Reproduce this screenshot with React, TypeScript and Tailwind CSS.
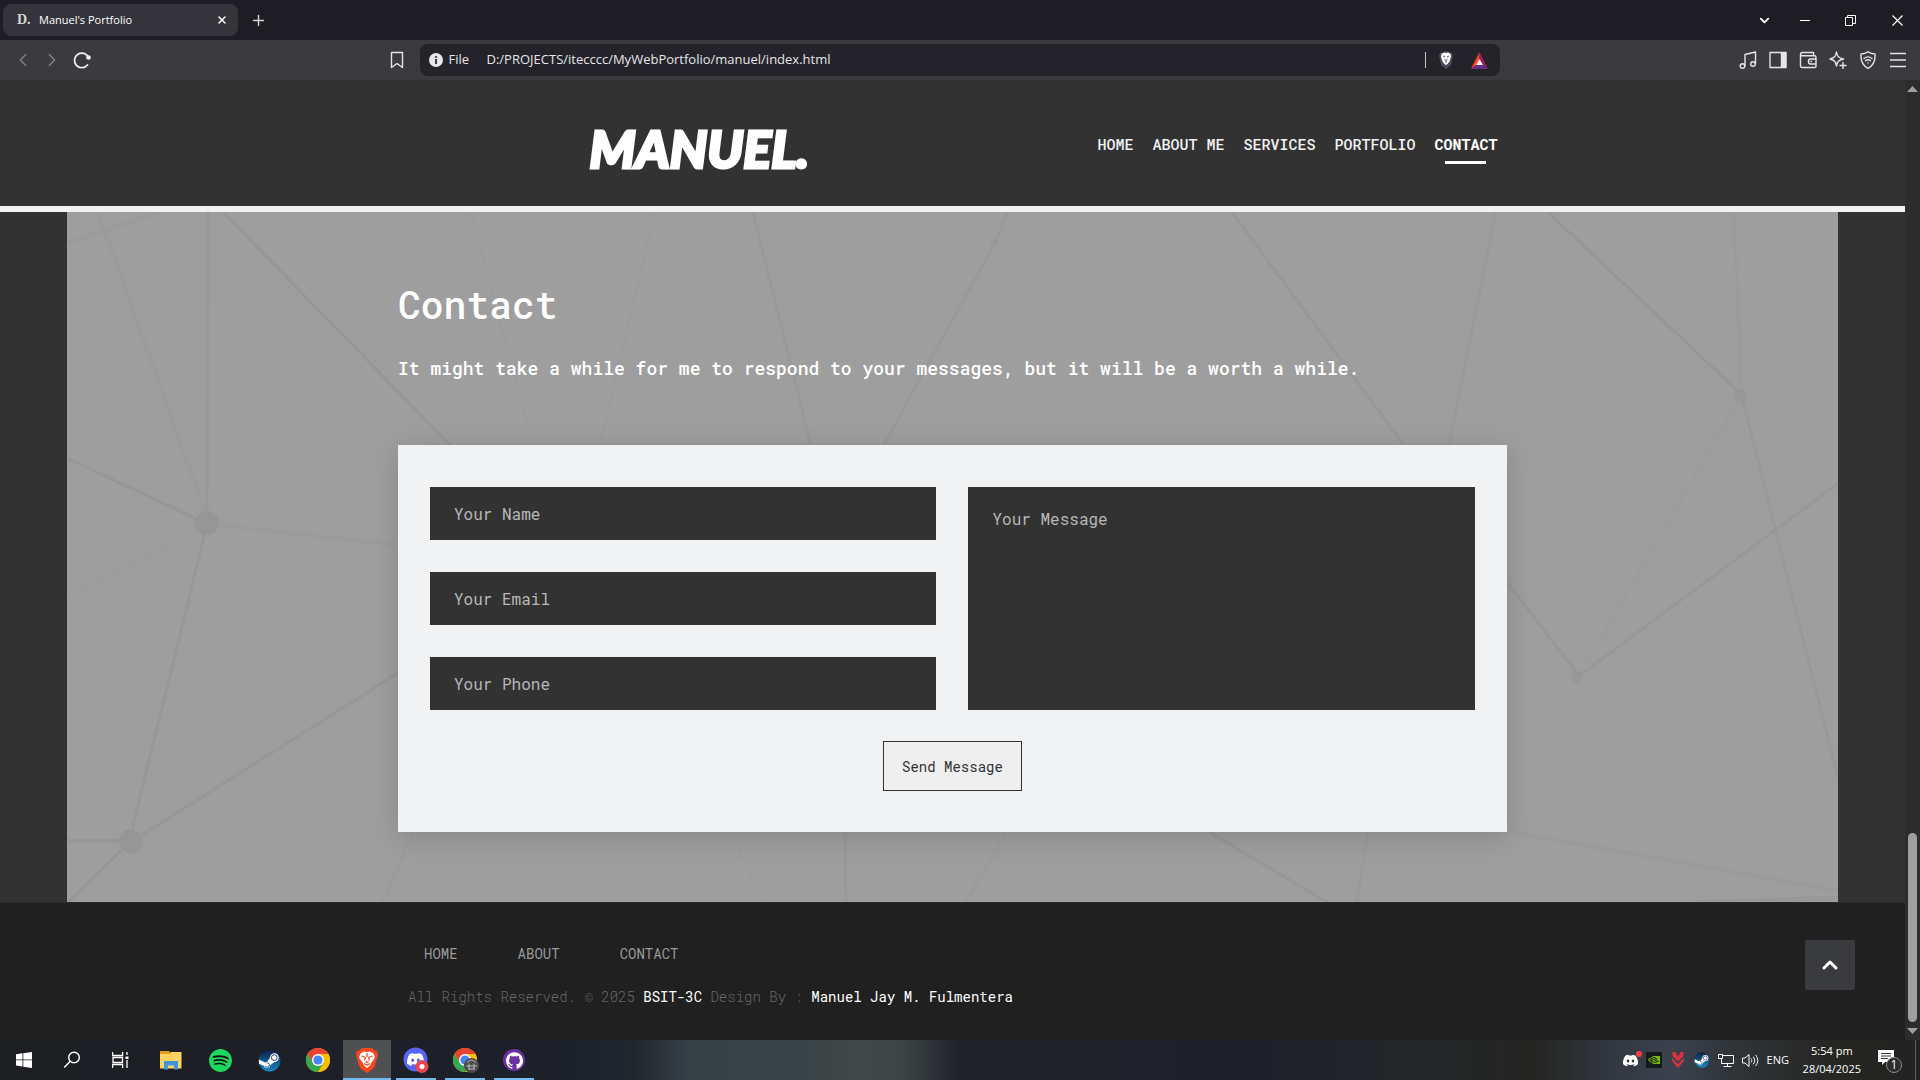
import React from "react";
import { X, Plus, ChevronLeft, ChevronRight, ChevronDown, ChevronUp } from "lucide-react";
import { SiSpotify, SiGithub, SiDiscord, SiNvidia } from "react-icons/si";

const UI = "font-['Open_Sans','Noto_Sans',sans-serif]";
const MONO = "font-['Roboto_Mono','Liberation_Mono',monospace]";

/* ---------- Browser chrome ---------- */

function TabBar() {
  return (
    <div className="flex h-10 items-center bg-[#1e1d23] text-white">
      <div className="ml-[3px] flex h-8 w-[235px] items-center rounded-lg bg-[#35343a] pr-2.5 pl-3.5">
        <span className="w-[22px] font-['Liberation_Serif',serif] text-sm font-bold text-[#d6d6d6]">D.</span>
        <span className="flex-1 text-[11px]">Manuel's Portfolio</span>
        <button aria-label="Close tab"><X size={12} strokeWidth={3} /></button>
      </div>
      <button aria-label="New tab" className="ml-3 text-[#d4d4d8]"><Plus size={17} strokeWidth={2} /></button>
      <div className="ml-auto flex items-center pr-4">
        <button aria-label="Search tabs" className="mr-7"><ChevronDown size={15} strokeWidth={3} /></button>
        <button aria-label="Minimize" className="mr-[35px]">
          <svg width="10" height="10" stroke="currentColor"><path d="M0 5.5h10" /></svg>
        </button>
        <button aria-label="Restore" className="mr-[35px]">
          <svg width="11" height="11" fill="none" stroke="currentColor"><path d="M.5 2.500h7v8h-7zM2.500 2.500v-2h8v8h-3" /></svg>
        </button>
        <button aria-label="Close window">
          <svg width="13" height="13" fill="none" stroke="currentColor" strokeWidth="1.2"><path d="M1.500 1.500l10 10M11.500 1.500l-10 10" /></svg>
        </button>
      </div>
    </div>
  );
}

function ToolIcon({ label, children }: { label: string; children: React.ReactNode }) {
  return (
    <button aria-label={label}>
      <svg width="18" height="18" viewBox="0 0 18 18" fill="none" stroke="currentColor" strokeWidth="1.4" strokeLinejoin="round" strokeLinecap="round">
        {children}
      </svg>
    </button>
  );
}

function Toolbar() {
  return (
    <div className="flex h-10 items-center bg-[#3b3a3f] text-[#e6e6ea]">
      <div className="flex flex-1 items-center pl-3">
        <button aria-label="Back" className="text-[#828187]"><ChevronLeft size={22} strokeWidth={1.6} /></button>
        <button aria-label="Forward" className="ml-[7px] text-[#828187]"><ChevronRight size={22} strokeWidth={1.6} /></button>
        <button aria-label="Reload" className="ml-2.5">
          <svg width="18" height="18" viewBox="0 0 18 18" fill="none" stroke="#f0f0f3" strokeWidth="1.7" strokeLinecap="round">
            <path d="M14.500 14a7.300 7.300 0 1 1 1-7.500" />
            <circle cx="15.500" cy="6.500" r="1.500" fill="#f0f0f3" />
          </svg>
        </button>
        <button aria-label="Bookmark" className="mr-3.5 ml-auto">
          <svg width="18" height="20" viewBox="0 0 18 20" fill="none" stroke="currentColor" strokeWidth="1.4" strokeLinejoin="round">
            <path d="M3.500 2.500h11v15l-5.500-4-5.500 4z" />
          </svg>
        </button>
      </div>
      <div className="flex h-8 w-[1080px] shrink items-center rounded-lg bg-[#242329] pr-3 pl-[9px] text-[13px]">
        <svg width="14" height="14" viewBox="0 0 14 14">
          <circle cx="7" cy="7" r="7" fill="#e6e6ea" />
          <path d="M6.200 6h1.700v5H6.200zM6.200 3h1.700v1.700H6.200z" fill="#242329" />
        </svg>
        <label htmlFor="url" className="w-[44px] pl-1.5">File</label>
        <input id="url" readOnly value="D:/PROJECTS/itecccc/MyWebPortfolio/manuel/index.html" className="min-w-0 flex-1 bg-transparent outline-none" />
        <span className="mr-3 h-4 w-px bg-[#c4c4c8]" />
        <button aria-label="Shields" className="mr-[17px]">
          <svg width="16" height="18" viewBox="0 0 16 18">
            <path d="M8 0l6 2 1 3-2 9-5 4-5-4L1 5l1-3z" fill="#4d4b5c" />
            <path d="M8 2l2-.5L12.500 3l.5 2.500-1.500 5L9.500 13 8 14l-1.500-1-2-2.500L3 5.500 3.500 3 6 1.500z" fill="#fff" />
            <path d="M5 5l2 1M11 5L9 6M6.500 8.500L8 9.500l1.500-1M7 11h2" stroke="#4d4b5c" fill="none" />
          </svg>
        </button>
        <button aria-label="Rewards">
          <svg width="17" height="17" viewBox="0 0 17 17">
            <path d="M8.500 0L0 17l8.500-6z" fill="#ff4724" />
            <path d="M8.500 0L17 17l-8.500-6z" fill="#9e1f63" />
            <path d="M0 17h17l-8.500-6z" fill="#662d91" />
            <path d="M8.500 7l3.300 6H5.200z" fill="#fff" />
          </svg>
        </button>
      </div>
      <div className="flex flex-1 items-center justify-end gap-3 pr-[13px]">
        <ToolIcon label="Media">
          <path d="M6 14.500V3.500L16.500 1v11.500" />
          <circle cx="3.500" cy="15" r="2.300" />
          <circle cx="14" cy="13" r="2.300" />
        </ToolIcon>
        <ToolIcon label="Sidebar">
          <path d="M1 1.500h16v15H1z" />
          <path d="M12.500 2h4v14h-4z" fill="currentColor" />
        </ToolIcon>
        <ToolIcon label="Wallet">
          <path d="M1.500 3.500C1.500 1.500 3 1.500 4 1.500h10.500v2.500M1.500 3.500c0 1 .7 1.300 2 1.300h12c1 0 1.500.5 1.500 1.500v9c0 .8-.5 1.200-1.300 1.200H3c-1 0-1.500-.5-1.500-1.500zM17 8h-5.500c-2.700 0-2.700 5 0 5H17M12 10.500h.5" />
        </ToolIcon>
        <ToolIcon label="Assistant">
          <path d="M7.500 1c.8 4.500 2 5.800 7 7-5 1.200-6.200 2.500-7 7-.8-4.500-2-5.800-6.500-7 4.500-1.200 5.700-2.500 6.500-7zM14 11.500v6M11 14.500h6" />
        </ToolIcon>
        <ToolIcon label="VPN">
          <path d="M9 .8c2.500 2 4.500 2.200 7 2.200.5 7-1.500 11.500-7 14.300C3.500 14.500 1.500 10 2 3c2.500 0 4.500-.2 7-2.200zM5 7.500c2.500-2 5.500-2 8 0M6.500 9.700c1.600-1.200 3.400-1.200 5 0M9 11.900h.1" />
        </ToolIcon>
        <ToolIcon label="Menu">
          <path d="M1 2.500h16M1 9h16M1 15.500h16" strokeLinecap="butt" />
        </ToolIcon>
      </div>
    </div>
  );
}

/* ---------- Page ---------- */

const navItems = ["HOME", "ABOUT ME", "SERVICES", "PORTFOLIO"];

function Header() {
  return (
    <header className="border-b-[6px] border-[#f1f2f4] bg-[#323232]">
      <div className="mx-auto flex h-[126px] max-w-[1110px] items-start justify-between pr-2.5 pl-48">
        <a href="#home" className="pt-[42px] font-['Lato_Black','Lato',sans-serif] text-[52px] leading-[52px] font-black text-white italic [-webkit-text-stroke:3px_white]">MANUEL.</a>
        <nav className="flex gap-[19px] pt-[52px] text-[15px] leading-6 font-medium whitespace-nowrap text-[#f1f2f4]">
          {navItems.map((n) => (
            <a key={n} href="#nav">{n}</a>
          ))}
          <a href="#contact" className="flex flex-col items-center gap-[5px] font-bold text-white">
            CONTACT
            <span className="h-[3px] w-[41px] bg-white" />
          </a>
        </nav>
      </div>
    </header>
  );
}

/* x1, y1, x2, y2, stroke width, opacity */
const strands: number[][] = [
  [0, 31, 92, 0, 4, 0.4], [141, 0, 140, 300, 3, 0.8], [31, 0, 138, 300, 3, 0.35], [156, 0, 383, 233, 3, 1],
  [404, 0, 466, 233, 3, 0.15], [588, 0, 533, 233, 3, 0.2], [686, 0, 744, 233, 3, 0.7], [941, 0, 928, 31, 3, 0.7],
  [928, 31, 813, 240, 3, 0.7], [1165, 0, 1337, 233, 3, 0.8], [1441, 371, 1511, 462, 3, 0.8], [1429, 0, 1382, 233, 3, 0.5],
  [1481, 0, 1672, 180, 3, 0.9], [1667, 0, 1675, 180, 3, 0.3], [1676, 188, 1772, 568, 3, 0.7], [1772, 271, 1511, 465, 3, 0.8],
  [1670, 191, 1520, 451, 3, 0.25], [0, 246, 132, 308, 3, 1], [150, 313, 331, 333, 3, 0.4], [129, 318, 0, 386, 3, 0.25],
  [138, 321, 65, 618, 3, 0.9], [331, 461, 75, 623, 3, 1], [0, 629, 52, 629, 4, 1], [55, 638, 1, 690, 3, 1],
  [346, 621, 316, 690, 3, 0.3], [665, 621, 695, 690, 3, 0.2], [778, 621, 779, 690, 3, 0.7], [939, 621, 899, 690, 3, 0.3],
  [1144, 621, 1260, 690, 3, 0.9], [1301, 621, 1290, 690, 3, 0.5], [1450, 621, 1772, 679, 4, 0.4], [1628, 690, 1772, 686, 4, 0.7],
];
/* cx, cy, r, opacity */
const knots: number[][] = [[140, 311, 12, 1], [64, 629, 12, 1], [1674, 184, 7, 0.8], [1510, 465, 6, 0.8], [928, 31, 4, 0.5]];

function Network() {
  return (
    <svg aria-hidden="true" className="absolute inset-0 h-full w-full" viewBox="0 0 1772 690" preserveAspectRatio="none">
      {strands.map(([x1, y1, x2, y2, w, o], i) => (
        <line key={i} x1={x1} y1={y1} x2={x2} y2={y2} strokeWidth={w} opacity={o} stroke="#979797" />
      ))}
      {knots.map(([cx, cy, r, o], i) => (
        <circle key={i} cx={cx} cy={cy} r={r} opacity={o} fill="#969696" />
      ))}
    </svg>
  );
}

const field = "w-full bg-[#323232] px-6 text-base text-[#f1f2f4] placeholder-[#b8b8b8] outline-none";

function Contact() {
  return (
    <main className="flex-1 bg-[#323232]">
      <section id="contact" className="relative mx-auto w-[93%] bg-[#9e9e9e] pt-[68px] pb-[70px]">
        <Network />
        <div className="relative mx-auto max-w-[1109px]">
          <h2 className="text-[38px] leading-[48px] font-medium text-white">Contact</h2>
          <p className="mt-[26px] text-lg leading-7 font-medium text-white">
            It might take a while for me to respond to your messages, but it will be a worth a while.
          </p>
          <form className="mt-[63px] bg-[#f1f2f4] px-8 pt-[42px] pb-[41px] shadow-[0_5px_25px_rgba(0,0,0,0.15)]" onSubmit={(e) => e.preventDefault()}>
            <div className="grid grid-cols-2 gap-8">
              <div className="flex flex-col gap-8">
                <input aria-label="Your Name" placeholder="Your Name" className={`${field} h-[53px]`} />
                <input aria-label="Your Email" type="email" placeholder="Your Email" className={`${field} h-[53px]`} />
                <input aria-label="Your Phone" type="tel" placeholder="Your Phone" className={`${field} h-[53px]`} />
              </div>
              <textarea aria-label="Your Message" placeholder="Your Message" className={`${field} h-full resize-none pt-5 leading-6`} />
            </div>
            <div className="mt-[31px] flex justify-center">
              <button className="h-[50px] border border-[#323232] bg-[#efefef] px-[18px] pt-0.5 text-sm text-[#323232]">Send Message</button>
            </div>
          </form>
        </div>
      </section>
    </main>
  );
}

function Footer() {
  return (
    <footer className="relative border-t border-dotted border-[#333] bg-[#202020] text-sm leading-5">
      <div className="mx-auto max-w-[1109px] pt-[41px] pb-[33px]">
        <nav className="flex gap-[60px] pl-[26px] text-[#9a9a9a]">
          <a href="#home">HOME</a>
          <a href="#about">ABOUT</a>
          <a href="#contact">CONTACT</a>
        </nav>
        <p className="mt-[23px] pl-2.5 font-light text-[#686868]">
          All Rights Reserved. © 2025 <a href="#bsit" className="font-normal text-white">BSIT-3C</a> Design By :{" "}
          <a href="#manuel" className="font-normal text-white">Manuel Jay M. Fulmentera</a>
        </p>
      </div>
      <button aria-label="Back to top" className="absolute right-[50px] bottom-[50px] flex h-[50px] w-[50px] items-center justify-center rounded-xs bg-[#3a3b3f] text-white">
        <ChevronUp size={24} strokeWidth={3} />
      </button>
    </footer>
  );
}

function Scrollbar() {
  return (
    <div aria-hidden="true" className="flex w-[15px] shrink-0 flex-col items-center bg-[#2c2c2c] py-1.5">
      <svg width="11" height="6"><path d="M5.500 0L11 6H0z" fill="#9f9f9f" /></svg>
      <div className="mt-auto mb-1.5 h-[189px] w-[9px] rounded-full bg-[#9f9f9f]" />
      <svg width="11" height="6"><path d="M5.500 6L11 0H0z" fill="#9f9f9f" /></svg>
    </div>
  );
}

/* ---------- Taskbar ---------- */

function ChromeLogo() {
  return (
    <svg width="24" height="24" viewBox="0 0 24 24">
      <circle cx="12" cy="12" r="12" fill="#fbbc04" />
      <path d="M12 12L1.600 6A12 12 0 0 1 22.400 6z" fill="#ea4335" />
      <path d="M12 6h10.400A12 12 0 0 1 12 24l5.200-9z" fill="#fbbc04" />
      <path d="M1.600 6l5.200 9L12 12V6z" fill="#ea4335" />
      <path d="M1.600 6A12 12 0 0 0 12 24l5.200-9H6.800z" fill="#34a853" />
      <circle cx="12" cy="12" r="6" fill="#fff" />
      <circle cx="12" cy="12" r="4.600" fill="#4285f4" />
    </svg>
  );
}

function SteamLogo({ size }: { size: number }) {
  return (
    <svg width={size} height={size} viewBox="0 0 24 24">
      <defs>
        <linearGradient id="steam" x1="0" y1="0" x2="0" y2="1">
          <stop offset="0" stopColor="#0f1d3f" />
          <stop offset="1" stopColor="#1787c4" />
        </linearGradient>
      </defs>
      <circle cx="12" cy="12" r="11.500" fill="url(#steam)" />
      <path d="M1 11l6.500 3a3.500 3.500 0 0 1 2-.6l3-4.400a4.600 4.600 0 1 1 4.700 4.600l-4.300 3.200a3.500 3.500 0 0 1-6.800.8L1 15.500z" fill="#fff" />
      <circle cx="17" cy="9" r="3" fill="none" stroke="#1c3c66" strokeWidth="1" />
      <path d="M7.500 17.500a2.300 2.300 0 1 0 1.500-3" fill="none" stroke="#1c5c96" strokeWidth="1" />
    </svg>
  );
}

const tasks: { label: string; icon: React.ReactNode; state?: "active" | "open" }[] = [
  {
    label: "File Explorer",
    icon: (
      <svg width="22" height="20" viewBox="0 0 22 20">
        <path d="M0 1h9l2 2h10v6H0z" fill="#e19d23" />
        <path d="M0 4h10l1-2h10.500v16.500H0z" fill="#fcd462" />
        <path d="M4 19.500v-8.500h14v8.500h-4v-4H8v4z" fill="#3f96d8" />
      </svg>
    ),
  },
  {
    label: "Spotify",
    icon: (
      <span className="rounded-full bg-[#111]"><SiSpotify size={23} color="#1ed760" /></span>
    ),
  },
  { label: "Steam", icon: <SteamLogo size={23} /> },
  { label: "Chrome", icon: <ChromeLogo /> },
  {
    label: "Brave",
    state: "active",
    icon: (
      <svg width="22" height="26" viewBox="0 0 22 26">
        <path d="M6 1h10l2.500 2.500L21 4l1 4-4 13-7 5-7-5L0 8l1-4 2.500-.5z" fill="#f9461c" />
        <path d="M11 5l3-.5 3.500 2 1.500 4-3.500 5-1.500 3-3 2.500-3-2.500-1.500-3L3 10.500l1.500-4 3.500-2z" fill="#fff" />
        <path d="M5.500 9l4 1.500-1 3M16.500 9l-4 1.500 1 3M8 16.500l3 1.500 3-1.500M11 6v4M9.500 14.500l1.500 1 1.500-1" stroke="#f9461c" strokeWidth="1.2" fill="none" />
      </svg>
    ),
  },
  {
    label: "Discord",
    state: "open",
    icon: (
      <svg width="26" height="26" viewBox="0 0 26 26">
        <circle cx="12.500" cy="12.500" r="12" fill="#5865f2" />
        <SiDiscord x="4" y="4" size={17} color="#fff" />
        <circle cx="19" cy="19.500" r="6.500" fill="#e5484d" />
        <circle cx="19" cy="19.500" r="2.500" fill="#fff" />
      </svg>
    ),
  },
  {
    label: "Chrome profile",
    state: "open",
    icon: (
      <span className="relative">
        <ChromeLogo />
        <svg className="absolute -right-0.5 -bottom-px" width="15" height="15" viewBox="0 0 15 15">
          <circle cx="7.500" cy="7.500" r="7.500" fill="#4b4b4b" />
          <path d="M3 4.500c3-3 6-3 9 0M2 8h11M4 11h7M5 5.500v6M10 5.500v6" stroke="#bdbdbd" fill="none" />
        </svg>
      </span>
    ),
  },
  {
    label: "GitHub Desktop",
    state: "open",
    icon: (
      <span className="flex h-[22px] w-[22px] items-center justify-center rounded-full bg-[#6f2f9f]"><SiGithub size={17} color="#fff" /></span>
    ),
  },
];

function Taskbar() {
  return (
    <div className="flex h-10 bg-[linear-gradient(90deg,#1c1e22_0%,#1d212b_30%,#22262e_33%,#364147_36%,#3a4447_42%,#414847_45%,#3c4545_47%,#1f2229_50%,#1e212a_66%,#22272a_73%,#252522_80%,#2f333b_83%,#3b424e_87%,#30353a_90%,#252521_96%,#222_100%)] text-white">
      <button aria-label="Start" className="flex w-12 items-center justify-center">
        <svg width="16" height="16" fill="#fff"><path d="M0 2.200L6.500 1.300v6.200H0zM7.300 1.200L16 0v7.500H7.300zM0 8.300h6.500v6.200L0 13.600zM7.300 8.300H16V16l-8.700-1.200z" /></svg>
      </button>
      <button aria-label="Search" className="flex w-12 items-center justify-center">
        <svg width="18" height="18" fill="none" stroke="#fff" strokeWidth="1.4"><circle cx="11" cy="6.500" r="5.300" /><path d="M7.200 10.300L1.200 16.500" /></svg>
      </button>
      <button aria-label="Task view" className="flex w-12 items-center justify-center">
        <svg width="17" height="16" fill="none" stroke="#fff" strokeWidth="1.3">
          <path d="M.6 0v3.500h10V0M.6 16v-3.500h10V16M1 5.500h9.500v5H1zM15 0v3M15 8v8" />
          <path d="M13.500 4.500h3v2.500h-3z" fill="#fff" stroke="none" />
        </svg>
      </button>
      <div className="ml-[3px] flex gap-px">
        {tasks.map((t) => (
          <button key={t.label} aria-label={t.label} className={`relative flex w-12 items-center justify-center ${t.state === "active" ? "bg-[#4f5052]" : ""}`}>
            {t.icon}
            {t.state && <span className={`absolute bottom-0 h-0.5 bg-[#76b9ed] ${t.state === "active" ? "w-12" : "w-10"}`} />}
          </button>
        ))}
      </div>
      <div className="ml-auto flex items-center">
        <div className="flex items-center gap-2">
          <span className="relative">
            <SiDiscord size={15} color="#fff" />
            <span className="absolute -top-0.5 -right-1 h-[6px] w-[6px] rounded-full bg-[#f23f42]" />
          </span>
          <span className="flex h-4 w-4 items-center justify-center bg-[#15191a]"><SiNvidia size={12} color="#76b900" /></span>
          <svg width="16" height="16"><path d="M2.500 0h3L8 5l2.500-5h3v4L8 9.500 2.500 4zM2 6l6 6 6-6v3l-6 7-6-7z" fill="#d5333d" /></svg>
          <SteamLogo size={16} />
          <svg width="16" height="15" fill="none" stroke="#fff"><path d="M5 2.500h10.500v8H3.500V6M.5 1.500h4v4h-4zM9.500 10.500v3M5.500 13.500h8" /></svg>
          <svg width="17" height="15" fill="none" stroke="#fff"><path d="M.5 5h2.500l4-3.500v12L3 10H.5zM9 5.500c1 1.300 1 2.700 0 4M11.200 3.800c2 2.500 2 5 0 7.500M13.500 2c3 3.500 3 7.500 0 11" /></svg>
          <span className="w-6 text-[11px]">ENG</span>
        </div>
        <div className="ml-3 text-center text-[11px] leading-[18px]">
          <div>5:54 pm</div>
          <div>28/04/2025</div>
        </div>
        <button aria-label="Notifications" className="relative mr-3 ml-4">
          <svg width="26" height="28" viewBox="0 0 26 28">
            <path d="M1 4h16v12H8l-3 3v-3H1z" fill="#fff" />
            <path d="M4 7.500h10M4 10h10M4 12.500h7" stroke="#333" />
            <circle cx="17" cy="19" r="7.500" fill="#2c2c2b" stroke="#8a8a8a" />
          </svg>
          <span className="absolute top-[11px] left-[13px] w-2 text-center text-xs leading-4">1</span>
        </button>
      </div>
      <span className="mr-1 w-px bg-[#5c5c5a]" />
    </div>
  );
}

export default function App() {
  return (
    <div className={`flex min-h-screen flex-col ${UI}`}>
      <TabBar />
      <Toolbar />
      <div className="flex flex-1">
        <div className={`flex min-w-0 flex-1 flex-col ${MONO}`}>
          <Header />
          <Contact />
          <Footer />
        </div>
        <Scrollbar />
      </div>
      <Taskbar />
    </div>
  );
}
